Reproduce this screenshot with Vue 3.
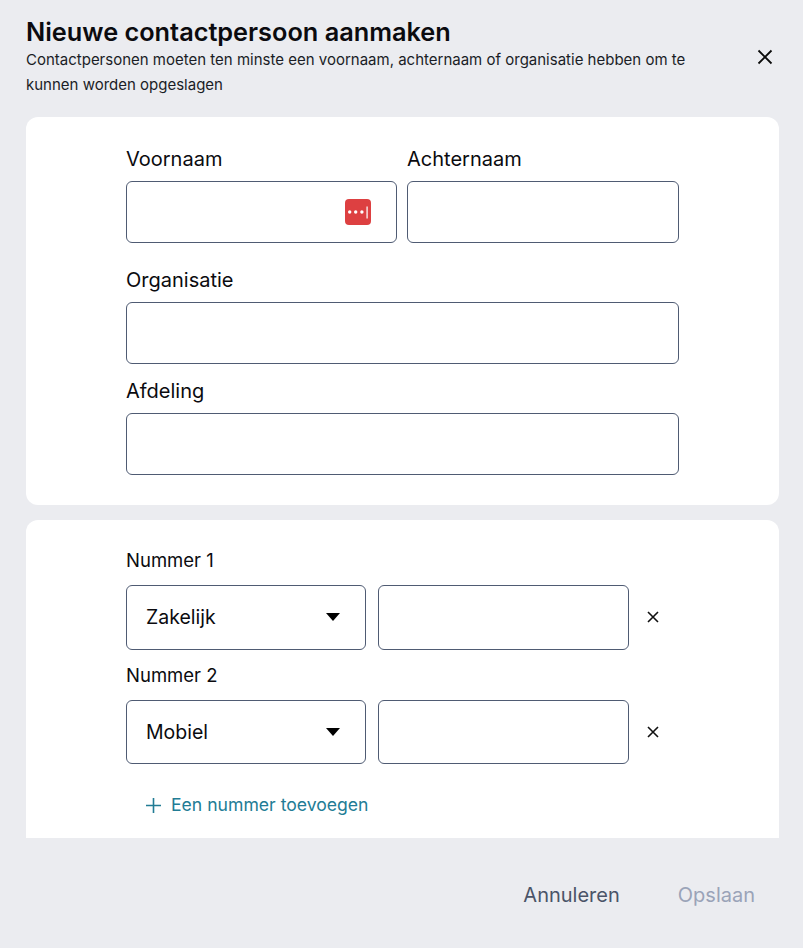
<script setup>
import { ref } from 'vue';

const numbers = ref([
  { id: 1, label: 'Nummer 1', type: 'Zakelijk' },
  { id: 2, label: 'Nummer 2', type: 'Mobiel' },
]);
</script>

<template>
  <div class="dialog">
    <header class="head">
      <div class="head-text">
        <h1>Nieuwe contactpersoon aanmaken</h1>
        <p>Contactpersonen moeten ten minste een voornaam, achternaam of organisatie hebben om te kunnen worden opgeslagen</p>
      </div>
      <button class="close" aria-label="Sluiten">
        <svg width="16" height="16" viewBox="0 0 16 16"><path d="M1.5 1.5l13 13M14.5 1.5l-13 13" stroke="#0a0a0a" stroke-width="1.8" fill="none"/></svg>
      </button>
    </header>

    <div class="scroll">
      <section class="card card-name">
        <div class="row">
          <div class="field">
            <label>Voornaam</label>
            <div class="input-wrap">
              <input type="text" />
              <span class="pw-icon">
                <svg width="26" height="26" viewBox="0 0 26 26">
                  <rect width="26" height="26" rx="4" fill="#dd4041"/>
                  <circle cx="4.7" cy="13" r="1.7" fill="#fff"/>
                  <circle cx="10.7" cy="13" r="1.7" fill="#fff"/>
                  <circle cx="16.9" cy="13" r="1.7" fill="#fff"/>
                  <rect x="21.3" y="7.5" width="1.6" height="12" fill="#f6d5d5"/>
                </svg>
              </span>
            </div>
          </div>
          <div class="field">
            <label>Achternaam</label>
            <input type="text" />
          </div>
        </div>
        <div class="field">
          <label>Organisatie</label>
          <input type="text" />
        </div>
        <div class="field">
          <label>Afdeling</label>
          <input type="text" />
        </div>
      </section>

      <section class="card card-numbers">
        <div v-for="item in numbers" :key="item.id" class="number">
          <label>{{ item.label }}</label>
          <div class="number-row">
            <div class="select">
              <span>{{ item.type }}</span>
              <svg width="14" height="8" viewBox="0 0 14 8"><path d="M0 0h14L7 8z" fill="#000"/></svg>
            </div>
            <input type="text" />
            <button class="remove" aria-label="Verwijderen">
              <svg width="12" height="12" viewBox="0 0 12 12"><path d="M1 1l10 10M11 1L1 11" stroke="#111" stroke-width="1.6" fill="none"/></svg>
            </button>
          </div>
        </div>
        <button class="add">
          <svg width="15" height="15" viewBox="0 0 15 15"><path d="M7.5 0v15M0 7.5h15" stroke="#227c95" stroke-width="1.6" fill="none"/></svg>
          <span>Een nummer toevoegen</span>
        </button>
      </section>
    </div>

    <footer class="foot">
      <button class="btn cancel">Annuleren</button>
      <button class="btn save" disabled>Opslaan</button>
    </footer>
  </div>
</template>

<style>
html, body {
  margin: 0;
  background: #ebecf0;
}
</style>

<style scoped>
.dialog {
  height: 948px;
  box-sizing: border-box;
  padding: 16px 24px 0 26px;
  display: flex;
  flex-direction: column;
  background: #ebecf0;
  font-family: Inter, "Liberation Sans", sans-serif;
  color: #0b0b0f;
  overflow: hidden;
}

.head {
  display: flex;
  align-items: center;
  justify-content: space-between;
  margin-bottom: 19px;
}

.head-text {
  width: 680px;
}

h1 {
  margin: 0;
  font-size: 25.3px;
  line-height: 32px;
  font-weight: 600;
}

p {
  margin: 0;
  margin-top: -1px;
  padding-bottom: 1px;
  font-size: 15px;
  line-height: 25px;
  color: #1a1d26;
}

.close {
  margin-right: 6px;
  padding: 0;
  width: 16px;
  height: 16px;
  border: 0;
  background: none;
  display: flex;
}

.scroll {
  flex: 1;
  min-height: 0;
  overflow: hidden;
}

.card {
  background: #fff;
  border-radius: 12px;
  padding: 30px 100px;
}

.card-name {
  height: 388px;
  box-sizing: border-box;
  padding-top: 29px;
  margin-bottom: 15px;
}

.row {
  display: flex;
  gap: 10px;
  margin-bottom: 24px;
}

.row .field {
  flex: 1;
  margin-bottom: 0;
}

.row .field:first-child {
  flex: none;
  width: 271px;
}

.field {
  display: flex;
  flex-direction: column;
  margin-bottom: 14px;
}

.field label {
  font-size: 20px;
  line-height: 26px;
  margin-bottom: 9px;
}

input {
  width: 100%;
  box-sizing: border-box;
  height: 62px;
  border: 1px solid #4f5b73;
  border-radius: 6px;
  background: #fff;
  outline: none;
  font: inherit;
}

.input-wrap {
  position: relative;
}

.pw-icon {
  position: absolute;
  right: 26px;
  top: 18px;
  display: flex;
}

.card-numbers {
  padding-top: 28px;
  padding-bottom: 60px;
}

.number label {
  display: block;
  font-size: 18.5px;
  line-height: 24px;
  margin-bottom: 13px;
}

.number-row {
  display: flex;
  align-items: stretch;
  height: 65px;
  margin-bottom: 13px;
}

.number + .number .number-row {
  height: 64px;
}

.number-row input {
  width: 251px;
  height: auto;
  margin-left: 12px;
}

.select {
  width: 240px;
  box-sizing: border-box;
  border: 1px solid #4f5b73;
  border-radius: 6px;
  padding: 0 25px 1px 19px;
  display: flex;
  align-items: center;
  justify-content: space-between;
  font-size: 19.5px;
}

.remove {
  margin-left: 18px;
  padding: 0 0 1px;
  width: 12px;
  border: 0;
  background: none;
  display: flex;
  align-items: center;
}

.add {
  margin: 29px 0 0 20px;
  padding: 0;
  border: 0;
  background: none;
  display: flex;
  align-items: center;
  gap: 10px;
  font-family: inherit;
  font-size: 17.6px;
  font-weight: 400;
  line-height: 24px;
  color: #227c95;
}

.foot {
  height: 110px;
  flex: none;
  display: flex;
  justify-content: flex-end;
  align-items: center;
  gap: 58px;
  padding-right: 24px;
  padding-top: 4px;
  box-sizing: border-box;
}

.btn {
  padding: 0;
  border: 0;
  background: none;
  font-family: inherit;
  font-size: 20px;
  font-weight: 400;
}

.cancel {
  color: #4a5468;
}

.save {
  color: #9aa3b8;
}
</style>
